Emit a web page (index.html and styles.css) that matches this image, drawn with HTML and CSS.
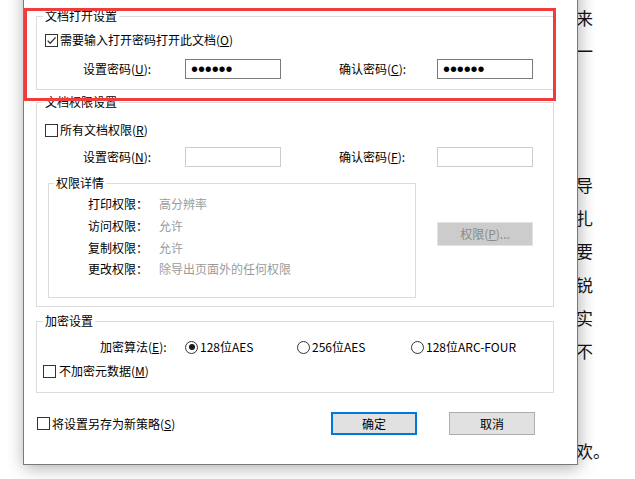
FILE: index.html
```html
<!DOCTYPE html>
<html lang="zh-CN">
<head>
<meta charset="utf-8">
<title>文档加密</title>
<link rel="stylesheet" href="styles.css">
</head>
<body>
<div class="doc">
  <div class="doc-line"><span>来</span></div>
  <div class="doc-line"><span>一</span></div>
  <div class="doc-line"></div>
  <div class="doc-line"></div>
  <div class="doc-line"></div>
  <div class="doc-line"><span>导</span></div>
  <div class="doc-line"><span>扎</span></div>
  <div class="doc-line"><span>要</span></div>
  <div class="doc-line"><span>锐</span></div>
  <div class="doc-line"><span>实</span></div>
  <div class="doc-line"><span>不</span></div>
  <div class="doc-line"></div>
  <div class="doc-line"></div>
  <div class="doc-line"><span>欢。</span></div>
  <div class="doc-line full">体验真正的课程学习与成长，只有在不断的思考、交流与实践中才能获得。</div>
</div>

<div class="dialog">
  <fieldset class="group g-open">
    <legend>文档打开设置</legend>
    <div class="group-body">
      <div class="row">
        <span class="cb"><svg width="11" height="11" viewBox="0 0 11 11"><path d="M1.6 5.6 L4.2 8.3 L9.6 2.4" fill="none" stroke="#333" stroke-width="1.3"/></svg></span>
        <span>需要输入打开密码打开此文档(<u>O</u>)</span>
      </div>
      <div class="pw-row">
        <span class="pw-label">设置密码(<u>U</u>):</span>
        <span class="field"><span class="dots">••••••</span></span>
        <span class="pw-label second">确认密码(<u>C</u>):</span>
        <span class="field"><span class="dots">••••••</span></span>
      </div>
    </div>
  </fieldset>

  <fieldset class="group g-perm">
    <legend>文档权限设置</legend>
    <div class="group-body">
      <div class="row">
        <span class="cb"></span>
        <span>所有文档权限(<u>R</u>)</span>
      </div>
      <div class="pw-row">
        <span class="pw-label">设置密码(<u>N</u>):</span>
        <span class="field off"></span>
        <span class="pw-label second">确认密码(<u>F</u>):</span>
        <span class="field off"></span>
      </div>
      <div class="perm-lower">
        <fieldset class="group g-detail">
          <legend>权限详情</legend>
          <div class="detail-body">
            <div class="detail-row"><span class="detail-key">打印权限：</span><span class="detail-val">高分辨率</span></div>
            <div class="detail-row"><span class="detail-key">访问权限：</span><span class="detail-val">允许</span></div>
            <div class="detail-row"><span class="detail-key">复制权限：</span><span class="detail-val">允许</span></div>
            <div class="detail-row"><span class="detail-key">更改权限：</span><span class="detail-val">除导出页面外的任何权限</span></div>
          </div>
        </fieldset>
        <span class="btn btn-perm">权限(<u>P</u>)...</span>
      </div>
    </div>
  </fieldset>

  <fieldset class="group g-enc">
    <legend>加密设置</legend>
    <div class="group-body">
      <div class="row">
        <span class="enc-label">加密算法(<u>E</u>):</span>
        <span class="radio-opt"><span class="radio on"></span><span>128位AES</span></span>
        <span class="radio-opt second"><span class="radio"></span><span>256位AES</span></span>
        <span class="radio-opt last"><span class="radio"></span><span>128位ARC-FOUR</span></span>
      </div>
      <div class="row meta-row">
        <span class="cb"></span>
        <span>不加密元数据(<u>M</u>)</span>
      </div>
    </div>
  </fieldset>

  <div class="footer">
    <span class="cb"></span>
    <span>将设置另存为新策略(<u>S</u>)</span>
    <div class="buttons">
      <span class="btn btn-default">确定</span>
      <span class="btn">取消</span>
    </div>
  </div>
</div>

<div class="highlight"></div>
</body>
</html>
```

FILE: styles.css
```css
* { box-sizing: border-box; }
html, body { margin: 0; padding: 0; }
body {
  width: 635px;
  height: 479px;
  overflow: hidden;
  background: #fff;
  position: relative;
  font-family: "Noto Sans CJK SC", "Noto Sans", sans-serif;
  color: #000;
}

/* background document */
.doc { padding-top: 1px; font-size: 17px; color: #141414; }
.doc-line {
  height: 33.35px;
  line-height: 33.35px;
  padding-left: 576px;
  white-space: nowrap;
}
.doc-line.full { padding-left: 45px; margin-top: 3px; }

/* dialog window */
.dialog {
  position: absolute;
  left: 23px;
  top: -20px;
  width: 555px;
  height: 485px;
  background: #fff;
  border: 1px solid #7a7a7a;
  box-shadow: 1px 3px 16px rgba(0, 0, 0, 0.32);
  padding: 26px 23px 0 12px;
  font-size: 12px;
  line-height: 18px;
}

.group {
  margin: 0;
  padding: 0;
  border: 1px solid #dcdcdc;
  min-width: 0;
}
.group > legend {
  margin-left: 6px;
  padding: 0 2px;
  line-height: 18px;
  height: 18px;
}
.g-perm { margin-top: 3px; }
.g-enc { margin-top: 5px; }

.group-body { padding: 6px 0 10px 8px; }
.g-perm > .group-body { padding: 10px 0 8px 8px; }
.g-enc > .group-body { padding: 8px 0 12px 6px; }

.row { display: flex; align-items: center; height: 18px; white-space: nowrap; }

.cb {
  width: 13px;
  height: 13px;
  border: 1px solid #333;
  background: #fff;
  margin-right: 2px;
  display: inline-flex;
  flex: none;
}
.cb svg { display: block; }

.pw-row {
  display: flex;
  align-items: center;
  height: 20px;
  margin: 10px 0 0 38px;
}
.g-perm .pw-row { margin-top: 8px; }
.pw-label { width: 102px; line-height: 20px; white-space: nowrap; }
.pw-label.second { width: 98px; margin-left: 58px; }

.field {
  width: 96px;
  height: 20px;
  border: 1px solid #7a7a7a;
  padding-left: 5px;
  display: flex;
  align-items: center;
  flex: none;
}
.field.off { border-color: #cccccc; }
.dots {
  font-family: "Liberation Sans", Arial, sans-serif;
  font-size: 20px;
  line-height: 18px;
  letter-spacing: -0.1px;
}

.perm-lower { display: flex; align-items: flex-start; margin: 7px 0 0 3px; }
.g-detail { width: 368px; flex: none; }
.g-detail > legend { margin-left: 5px; }
.detail-body { padding: 1px 0 17px 39px; }
.detail-row { display: flex; height: 21.8px; line-height: 21.8px; white-space: nowrap; }
.detail-key { width: 71px; }
.detail-val { color: #9b9b9b; }

.btn {
  height: 23px;
  width: 86px;
  background: #e1e1e1;
  border: 1px solid #adadad;
  display: flex;
  align-items: center;
  justify-content: center;
  flex: none;
}
.btn-perm {
  width: 96px;
  height: 24px;
  margin: 48px 0 0 21px;
  background: #cccccc;
  border-color: #e3e3e3;
  color: #8a8a8a;
}
.btn-default { border: 2px solid #0078d7; }

.enc-label { width: 85px; margin-left: 57px; }
.radio-opt { display: flex; align-items: center; width: 112px; }
.radio-opt.second { width: 114px; }
.radio-opt.last { width: auto; }
.radio {
  width: 13px;
  height: 13px;
  border: 1px solid #333;
  border-radius: 50%;
  margin-right: 2px;
  display: flex;
  align-items: center;
  justify-content: center;
  flex: none;
}
.radio.on::after {
  content: "";
  width: 6px;
  height: 6px;
  border-radius: 50%;
  background: #1a1a1a;
}
.meta-row { margin-top: 6px; }
.meta-row .cb { margin-right: 3px; }

.footer {
  display: flex;
  align-items: center;
  height: 23px;
  margin: 19px 0 0 1px;
  white-space: nowrap;
}
.buttons { margin-left: auto; margin-right: 19px; display: flex; gap: 32px; }

/* red annotation frame over the dialog */
.highlight {
  position: absolute;
  left: 24px;
  top: 8px;
  width: 532px;
  height: 93px;
  border: 3px solid #f23b3b;
}
```
